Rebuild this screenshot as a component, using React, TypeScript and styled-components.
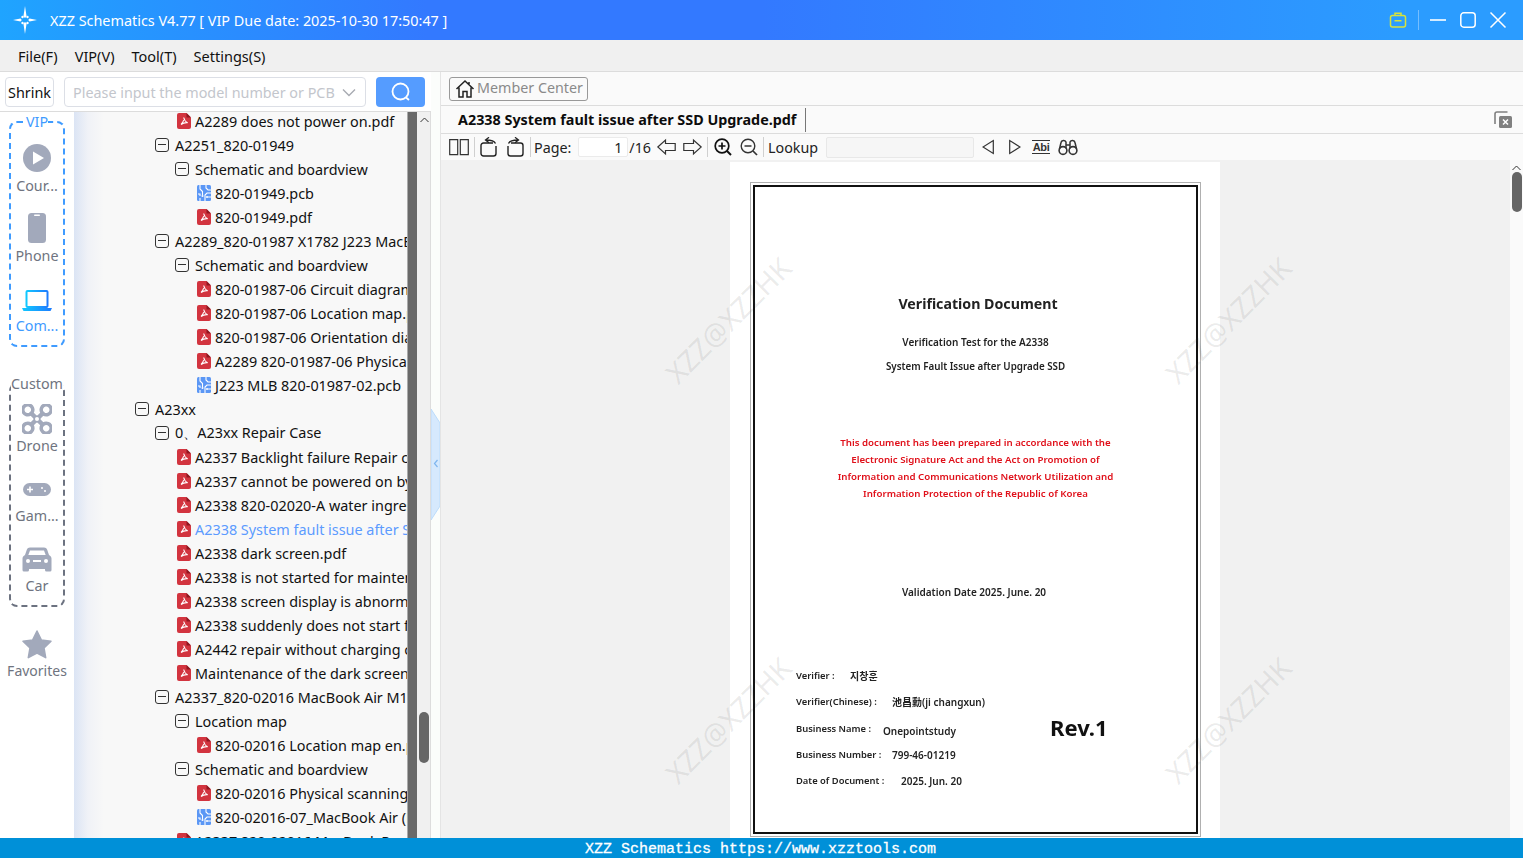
import React from "react";
import styled, { createGlobalStyle } from "styled-components";

const Global = createGlobalStyle`
  html, body { margin: 0; padding: 0; height: 100%; overflow: hidden; background: #fff; }
  #root { height: 100%; }
  * { box-sizing: border-box; }
  body { font-family: "Noto Sans", "Open Sans", sans-serif; color: #111; }
`;

const Shell = styled.div`display:flex;flex-direction:column;height:858px;width:1523px;overflow:hidden;`;
const TitleBar = styled.header`
  height:40px;flex:none;display:flex;align-items:center;color:#fff;padding-left:13px;
  background:linear-gradient(90deg,#1fa4ff 0%,#3379ff 28%,#3379ff 50%,#2b9cff 92%,#2b9cff 100%);
`;
const Logo = styled.svg`display:block;width:24px;height:28px;flex:none;`;
const Title = styled.div`margin-left:13px;font-size:14.4px;white-space:nowrap;flex:1;`;
const WinControls = styled.div`display:flex;align-items:center;padding-right:16px;`;
const WinDivider = styled.span`width:1px;height:20px;background:rgba(255,255,255,.35);margin:0 10px 0 11px;`;
const WinBtn = styled.svg`display:block;width:18px;height:18px;margin-left:${p=>p.$ml ?? 0}px;`;
const MenuBar = styled.nav`
  height:32px;flex:none;background:#f0f0f0;border-bottom:1px solid #dcdcdc;display:flex;align-items:center;padding-left:18px;gap:17px;font-size:14.5px;
`;
const Body = styled.div`flex:1;display:flex;min-height:0;`;
const LeftPane = styled.section`width:431px;flex:none;display:flex;flex-direction:column;min-height:0;`;
const SearchBar = styled.div`height:40px;flex:none;display:flex;align-items:center;padding:0 6px 0 5px;border-bottom:1px solid #dcdcdc;background:#fff;`;
const Shrink = styled.button`width:49px;height:30px;padding:1px 0 0;border:1px solid #dcdfe6;border-radius:4px;background:#fff;font:14.4px "Noto Sans",sans-serif;color:#111;`;
const SearchBox = styled.div`margin-left:10px;width:302px;height:30px;border:1px solid #dcdfe6;border-radius:4px;display:flex;align-items:center;justify-content:space-between;padding:2px 9px 0 8px;color:#c3c6cc;font-size:14.35px;white-space:nowrap;`;
const SearchBtn = styled.button`margin-left:10px;width:49px;height:30px;border:0;border-radius:4px;background:#559cff;display:flex;align-items:center;justify-content:center;padding:0;`;
const LeftBody = styled.div`flex:1;display:flex;min-height:0;`;
const Side = styled.aside`width:74px;flex:none;background:#fff;padding:3px 0 0 9px;display:flex;flex-direction:column;`;
const Group = styled.fieldset`
  width:56px;margin:0;padding:0;border:2px dashed ${p=>p.$c};border-radius:8px;height:${p=>p.$h}px;margin-top:${p=>p.$mt}px;
  display:flex;flex-direction:column;align-items:center;
`;
const Legend = styled.legend`padding:0;margin:0 auto;font-size:14.3px;line-height:14px;color:${p=>p.$c};white-space:nowrap;`;
const SideItem = styled.div`
  width:70px;height:70px;flex:none;margin:0 -9px;display:flex;flex-direction:column;align-items:center;color:${p=>p.$on?"#3f9bff":"#6f7480"};font-size:14.3px;line-height:20px;
  svg{display:block;width:30px;height:30px;margin-bottom:${p=>p.$tight?2:3}px;flex:none;}
`;
const GroupInner = styled.div`display:flex;flex-direction:column;align-items:center;padding-top:${p=>p.$pt}px;`;
const Fav = styled(SideItem)`margin:23px 0 0 -7px;font-size:14px;line-height:18px;`;
const TreeWrap = styled.div`width:333px;flex:none;overflow:hidden;background:linear-gradient(90deg,#dbe4f4 0,#f0f2f7 14px,#f8f8f8 30px);`;
const Tree = styled.div`margin-top:-3px;`;
const Row = styled.div`height:24px;display:flex;align-items:center;white-space:nowrap;padding-left:${p=>(p.$d-1)*20+61}px;font-size:14.4px;color:${p=>p.$on?"#5c9bff":"#111"};`;
const ToggleBox = styled.span`width:14px;height:14px;flex:none;border:1px solid #333;border-radius:3px;margin-right:6px;position:relative;&:after{content:"";position:absolute;left:2px;right:2px;top:5px;height:1.4px;background:#333;}`;
const FileIcon = styled.svg`width:14px;height:16px;flex:none;margin-left:2px;margin-right:4px;`;
const DarkBar = styled.div`width:10px;flex:none;background:#696969;border-left:1px solid #aaa;`;
const ScrollTrack = styled.div`width:14px;flex:none;background:#f0f0f0;border-right:1px solid #ddd;position:relative;`;
const Thumb = styled.div`position:absolute;left:${p=>p.$l}px;width:10px;top:${p=>p.$t}px;height:${p=>p.$h}px;background:#666;border-radius:5px;`;
const ChevUp = styled.svg`position:absolute;left:${p=>p.$l}px;top:${p=>p.$t}px;width:9px;height:6px;`;
const Splitter = styled.div`width:10px;flex:none;background:#fbfdfb;border-right:1px solid #e4e4e4;position:relative;`;
const Collapse = styled.svg`position:absolute;left:0;top:337px;width:9px;height:111px;`;
const RightPane = styled.main`flex:1;min-width:0;display:flex;flex-direction:column;background:#fafafa;`;
const MemberRow = styled.div`height:34px;flex:none;display:flex;align-items:center;padding:0 0 0 8px;border-bottom:1px solid #dcdcdc;`;
const MemberBtn = styled.button`width:139px;height:24px;display:flex;align-items:center;gap:2px;padding:0 0 0 5px;border:1px solid #999;border-radius:3px;background:#fafafa;color:#8a8a8a;font:14.3px "Noto Sans",sans-serif;white-space:nowrap;span{position:relative;top:-1px;}`;
const TabRow = styled.div`height:28px;flex:none;display:flex;align-items:center;padding:0 11px 0 17px;border-bottom:1px solid #dcdcdc;`;
const TabTitle = styled.div`font-size:14.35px;font-weight:700;color:#0c0c0c;white-space:nowrap;`;
const TabSep = styled.span`width:1px;height:24px;background:#777;margin-left:9px;flex:none;`;
const TabClose = styled.svg`width:18px;height:18px;margin-left:auto;`;
const ToolRow = styled.div`height:26px;flex:none;display:flex;align-items:center;padding-left:8px;font-size:14.3px;color:#222;`;
const Tool = styled.svg`display:block;flex:none;margin-left:${p=>p.$ml ?? 0}px;width:${p=>p.$w}px;height:${p=>p.$h ?? 18}px;`;
const Sep = styled.span`width:1px;height:20px;background:#d0d0d0;margin:0 ${p=>p.$r ?? 6}px 0 ${p=>p.$l ?? 6}px;flex:none;`;
const PageInput = styled.div`width:50px;height:20px;margin-left:7px;background:#fff;border:1px solid #ebebeb;border-radius:2px;text-align:right;padding-right:5px;line-height:19px;`;
const PageTotal = styled.span`margin-left:1px;`;
const LookupInput = styled.div`width:148px;height:21px;margin-left:8px;background:#f6f6f6;border:1px solid #e8e8e8;border-radius:2px;`;
const AbiIcon = styled.span`margin-left:11px;width:18px;height:14px;flex:none;font:700 11px/12px "Liberation Sans",sans-serif;letter-spacing:-.3px;text-align:center;color:#333;border-bottom:1.5px solid #333;border-top:1px solid #333;`;
const Viewer = styled.div`flex:1;min-height:0;display:flex;justify-content:center;background:#f1f1f1;overflow:hidden;position:relative;padding-right:13px;padding-top:2px;`;
const VScroll = styled.div`position:absolute;right:0;top:0;bottom:0;width:13px;background:#fafafa;`;
const Mark = styled.div`position:absolute;left:${p=>p.$x}px;top:${p=>p.$y}px;transform:translate(-50%,-50%) rotate(-45deg);font-size:28.5px;color:rgba(60,60,60,.1);white-space:nowrap;pointer-events:none;`;
const PageSheet = styled.div`width:490px;height:700px;flex:none;background:#fff;padding:20px 19px 0 20px;margin-left:-1px;`;
const Outer = styled.div`width:451px;height:655px;border:1px solid #b0b0b0;padding:2px;`;
const Inner = styled.div`height:100%;border:2px solid #111;font-family:"Noto Sans","Noto Sans CJK KR",sans-serif;font-weight:600;color:#222;filter:blur(.25px);display:flex;flex-direction:column;align-items:center;`;
const DocTitle = styled.div`font-size:14.2px;font-weight:700;line-height:20px;margin-top:107px;margin-left:5px;`;
const DocSub = styled.div`font-size:${p=>p.$fs ?? 10}px;line-height:14px;margin-top:${p=>p.$mt}px;margin-left:${p=>p.$ml ?? 0}px;white-space:nowrap;`;
const DocRed = styled.div`font-size:9.7px;line-height:17px;color:#e0101a;margin-top:60px;margin-left:0;text-align:center;white-space:nowrap;`;
const Sign = styled.div`align-self:stretch;display:flex;margin-top:70px;`;
const SignList = styled.div`margin-left:41px;`;
const SignRow = styled.div`font-size:9.4px;line-height:14px;height:26.3px;white-space:nowrap;display:flex;`;
const SignKey = styled.span`width:${p=>p.$w}px;flex:none;`;
const SignVal = styled.span`font-size:10px;position:relative;top:${p=>p.$dy ?? 0}px;`;
const Rev = styled.div`font-size:22px;font-weight:700;color:#111;margin:44px 0 0 65px;line-height:28px;`;
const Status = styled.footer`height:20px;flex:none;background:#0090d8;color:#fff;text-align:center;font:15px/20px "Liberation Mono",monospace;-webkit-text-stroke:.3px #fff;white-space:pre;padding:2px 2px 0 0;`;

const Pdf = () => (
  <FileIcon viewBox="0 0 14 16">
    <path d="M2 0h7.500L14 4.500V14a2 2 0 0 1-2 2H2a2 2 0 0 1-2-2V2a2 2 0 0 1 2-2z" fill="#d2343f"/>
    <path d="M9.500 0L14 4.500H9.500z" fill="#8f1720"/>
    <path d="M6.700 4.500c.5 2.300 1.700 4.300 4 5.200-2.200-.2-4.700.3-6.700 1.800M6.700 7.200c-.5 1.500-1.300 3-2.700 4.300" fill="none" stroke="#fff" strokeWidth="1.100"/>
  </FileIcon>
);
const Pcb = () => (
  <FileIcon viewBox="0 0 14 16">
    <rect width="14" height="16" rx="1.500" fill="#5b97f5"/>
    <path d="M3 0v4l2.500 2.500V10M3 16v-3M9 0v3l2 2h3M8 16v-6l2-2h4M10.500 12H14M1 9h2v2" fill="none" stroke="#fff" strokeWidth="1.100"/>
    <circle cx="5.500" cy="11" r="1" fill="#fff"/><circle cx="10" cy="12" r="1" fill="#fff"/>
  </FileIcon>
);

type R = [number, "box"|"pdf"|"pcb", string, boolean?];
const rows: R[] = [
  [3,"pdf","A2289 does not power on.pdf"],
  [2,"box","A2251_820-01949"],
  [3,"box","Schematic and boardview"],
  [4,"pcb","820-01949.pcb"],
  [4,"pdf","820-01949.pdf"],
  [2,"box","A2289_820-01987 X1782 J223 MacBook Pro"],
  [3,"box","Schematic and boardview"],
  [4,"pdf","820-01987-06 Circuit diagram.pdf"],
  [4,"pdf","820-01987-06 Location map.pdf"],
  [4,"pdf","820-01987-06 Orientation diagram.pdf"],
  [4,"pdf","A2289 820-01987-06 Physical scanning.pdf"],
  [4,"pcb","J223 MLB 820-01987-02.pcb"],
  [1,"box","A23xx"],
  [2,"box","0、A23xx Repair Case"],
  [3,"pdf","A2337 Backlight failure Repair case.pdf"],
  [3,"pdf","A2337 cannot be powered on by repair.pdf"],
  [3,"pdf","A2338 820-02020-A water ingress repair.pdf"],
  [3,"pdf","A2338 System fault issue after SSD Upgrade.pdf",true],
  [3,"pdf","A2338 dark screen.pdf"],
  [3,"pdf","A2338 is not started for maintenance.pdf"],
  [3,"pdf","A2338 screen display is abnormal.pdf"],
  [3,"pdf","A2338 suddenly does not start fault.pdf"],
  [3,"pdf","A2442 repair without charging case.pdf"],
  [3,"pdf","Maintenance of the dark screen.pdf"],
  [2,"box","A2337_820-02016 MacBook Air M1"],
  [3,"box","Location map"],
  [4,"pdf","820-02016 Location map en.pdf"],
  [3,"box","Schematic and boardview"],
  [4,"pdf","820-02016 Physical scanning.pdf"],
  [4,"pcb","820-02016-07_MacBook Air (M1).pcb"],
  [3,"pdf","A2337 820-02016 MacBook Repair.pdf"],
];

const G = "#a2a9bb";

export default function App() {
  return (
    <Shell>
      <Global/>
      <TitleBar>
        <Logo viewBox="0 0 24 28">
          <path d="M12 0l1.600 10.500-1.600 1.500-1.600-1.500zM12 28l-1.600-10.500 1.600-1.500 1.600 1.500zM0 14l7.500-1.500 1.300 1.500-1.300 1.500zM24 14l-7.500 1.500-1.300-1.500 1.300-1.500z" fill="#fff"/>
          <circle cx="9.500" cy="11" r="1.200" fill="#fff"/><circle cx="14.500" cy="11" r="1.200" fill="#fff"/><circle cx="9.500" cy="17" r="1.200" fill="#fff"/><circle cx="14.500" cy="17" r="1.200" fill="#fff"/>
        </Logo>
        <Title>XZZ Schematics V4.77 [ VIP Due date: 2025-10-30 17:50:47 ]</Title>
        <WinControls>
          <WinBtn viewBox="0 0 18 18"><rect x="1.500" y="4.500" width="15" height="11.500" rx="2" fill="none" stroke="#d7e23c" strokeWidth="1.500"/><path d="M6 4.500V2.300h6v2.200M5.500 9.800h7" fill="none" stroke="#d7e23c" strokeWidth="1.500"/></WinBtn>
          <WinDivider/>
          <WinBtn viewBox="0 0 18 18"><path d="M1 9h16" stroke="#fff" strokeWidth="1.600"/></WinBtn>
          <WinBtn $ml={12} viewBox="0 0 18 18"><rect x="1.800" y="1.800" width="14.400" height="14.400" rx="3" fill="none" stroke="#fff" strokeWidth="1.500"/></WinBtn>
          <WinBtn $ml={12} viewBox="0 0 18 18"><path d="M1.500 1.500l15 15M16.500 1.500l-15 15" stroke="#fff" strokeWidth="1.500"/></WinBtn>
        </WinControls>
      </TitleBar>
      <MenuBar><span>File(F)</span><span>VIP(V)</span><span>Tool(T)</span><span>Settings(S)</span></MenuBar>
      <Body>
        <LeftPane>
          <SearchBar>
            <Shrink>Shrink</Shrink>
            <SearchBox>
              <span>Please input the model number or PCB</span>
              <svg width="14" height="9" viewBox="0 0 14 9"><path d="M1 1.500l6 6 6-6" fill="none" stroke="#a8abb2" strokeWidth="1.400"/></svg>
            </SearchBox>
            <SearchBtn aria-label="search">
              <svg width="20" height="20" viewBox="0 0 20 20"><circle cx="9.500" cy="9.500" r="8" fill="none" stroke="#fff" strokeWidth="1.800"/><path d="M15 15.500l3 2.500" stroke="#fff" strokeWidth="1.800"/></svg>
            </SearchBtn>
          </SearchBar>
          <LeftBody>
            <Side>
              <Group $c="#3f9bff" $h={232} $mt={0}>
                <Legend $c="#3f9bff">VIP</Legend>
                <GroupInner $pt={14}>
                  <SideItem>
                    <svg viewBox="0 0 30 30"><circle cx="15" cy="15" r="14" fill={G}/><path d="M11 8.500l11 6.500-11 6.500z" fill="#fff"/></svg>
                    <span>Cour...</span>
                  </SideItem>
                  <SideItem>
                    <svg viewBox="0 0 30 30"><rect x="6" y="0" width="18" height="30" rx="3.500" fill={G}/><rect x="12" y="1.500" width="6" height="1.500" rx=".7" fill="#fff"/></svg>
                    <span>Phone</span>
                  </SideItem>
                  <SideItem $on>
                    <svg viewBox="0 0 30 30"><defs><linearGradient id="lp" x1="0" x2="1"><stop offset="0" stopColor="#11c8ff"/><stop offset="1" stopColor="#1d7cff"/></linearGradient></defs><rect x="4.500" y="8" width="21" height="16" rx="1" fill="none" stroke="url(#lp)" strokeWidth="2"/><path d="M0 25h30l-1.500 3h-27z" fill="url(#lp)"/></svg>
                    <span>Com...</span>
                  </SideItem>
                </GroupInner>
              </Group>
              <Group $c="#6c7280" $h={230} $mt={30}>
                <Legend $c="#6f7480">Custom</Legend>
                <GroupInner $pt={13}>
                  <SideItem $tight>
                    <svg viewBox="0 0 30 30"><g fill="none" stroke={G}><path d="M10 8.500A5 5 0 1 0 8.500 10M20 8.500A5 5 0 1 1 21.500 10M10 21.500A5 5 0 1 1 8.500 20M20 21.500A5 5 0 1 0 21.500 20" strokeWidth="3.500"/><path d="M8 8l14 14M22 8L8 22" strokeWidth="4.500"/></g><circle cx="15" cy="15" r="3.400" fill={G}/><circle cx="15" cy="15" r="2" fill="#fff"/></svg>
                    <span>Drone</span>
                  </SideItem>
                  <SideItem $tight>
                    <svg viewBox="0 0 30 30"><rect x="1" y="9" width="28" height="13" rx="6.500" fill={G}/><path d="M8 12.500v6M5 15.500h6" stroke="#fff" strokeWidth="1.600"/><circle cx="20" cy="14" r="1" fill="#fff"/><circle cx="23" cy="17" r="1" fill="#fff"/></svg>
                    <span>Gam...</span>
                  </SideItem>
                  <SideItem $tight>
                    <svg viewBox="0 0 30 30"><path d="M8 3.500h14c1.500 0 2.600.8 3.200 2.300L27 11c1.500.8 2.500 2 2.500 3.500V26a1.500 1.500 0 0 1-1.500 1.500h-3.500A1.500 1.500 0 0 1 23 26v-1H7v1a1.500 1.500 0 0 1-1.500 1.500H2A1.500 1.500 0 0 1 .5 26V14.500C.5 13 1.500 11.800 3 11l1.800-5.200C5.400 4.300 6.500 3.500 8 3.500z" fill={G}/><path d="M8 6.500h14l1.700 4.500H6.300z" fill="#fff"/><circle cx="6" cy="17" r="2" fill="#fff"/><circle cx="24" cy="17" r="2" fill="#fff"/><rect x="11" y="16" width="8" height="2" fill="#fff"/></svg>
                    <span>Car</span>
                  </SideItem>
                </GroupInner>
              </Group>
              <Fav $tight>
                <svg viewBox="0 0 30 30"><path d="M15 1l4.300 8.900 9.700 1.300-7 6.800 1.700 9.700L15 23.100l-8.700 4.600L8 18l-7-6.800 9.700-1.300z" fill={G} stroke={G} strokeLinejoin="round" strokeWidth="1.500"/></svg>
                <span>Favorites</span>
              </Fav>
            </Side>
            <TreeWrap>
              <Tree>
                {rows.map(([d,k,t,on],i)=>(
                  <Row key={i} $d={d} $on={on}>
                    {k==="box"?<ToggleBox/>:k==="pdf"?<Pdf/>:<Pcb/>}
                    <span>{t}</span>
                  </Row>
                ))}
              </Tree>
            </TreeWrap>
            <DarkBar/>
            <ScrollTrack>
              <ChevUp $l={3} $t={5} viewBox="0 0 9 6"><path d="M.5 5L4.500 1l4 4" fill="none" stroke="#333"/></ChevUp>
              <Thumb $l={2} $t={600} $h={51}/>
            </ScrollTrack>
          </LeftBody>
        </LeftPane>
        <Splitter>
          <Collapse viewBox="0 0 9 111">
            <path d="M0 0l9 14v83L0 111z" fill="#d6e9fd" stroke="#bcdcfb"/>
            <path d="M6.500 51l-3 3.500 3 3.500" fill="none" stroke="#7fb6ef" strokeWidth="1.200"/>
          </Collapse>
        </Splitter>
        <RightPane>
          <MemberRow>
            <MemberBtn>
              <svg width="20" height="20" viewBox="0 0 20 20"><path d="M1.500 10L10 2l8.500 8M4 8.500V18h4v-5.500h4V18h4V8.500M14 3v3" fill="none" stroke="#222" strokeWidth="1.500"/></svg>
              <span>Member Center</span>
            </MemberBtn>
          </MemberRow>
          <TabRow>
            <TabTitle>A2338 System fault issue after SSD Upgrade.pdf</TabTitle>
            <TabSep/>
            <TabClose viewBox="0 0 18 18"><path d="M13.500 1H3a2 2 0 0 0-2 2v10" fill="none" stroke="#808080" strokeWidth="1.600"/><rect x="5" y="5" width="13" height="12" rx="1.500" fill="#808080"/><path d="M9 8.500l5 5M14 8.500l-5 5" stroke="#fff" strokeWidth="1.500"/></TabClose>
          </TabRow>
          <ToolRow>
            <Tool $w={20} viewBox="0 0 20 18"><path d="M.7 1.700h8v15h-8zM11.300 1.700h8v15h-8z" fill="none" stroke="#333" strokeWidth="1.200"/></Tool>
            <Sep $l={5} $r={5}/>
            <Tool $w={18} $h={20} viewBox="0 0 18 20"><path d="M13 6H3.500A2.500 2.500 0 0 0 1 8.500v8A2.500 2.500 0 0 0 3.500 19h10a2.500 2.500 0 0 0 2.500-2.500V9" fill="none" stroke="#222" strokeWidth="1.400"/><path d="M15.500 6.500C14.500 4 11.500 3 6 3M9 .3L5.500 3 9 5.700" fill="none" stroke="#222" strokeWidth="1.300"/></Tool>
            <Tool $ml={8} $w={18} $h={20} viewBox="0 0 18 20"><path d="M5 6h9.500A2.500 2.500 0 0 1 17 8.500v8a2.500 2.500 0 0 1-2.500 2.500h-10A2.500 2.500 0 0 1 2 16.500V9" fill="none" stroke="#222" strokeWidth="1.400"/><path d="M2.500 6.500C3.500 4 6.500 3 12 3M9 .3L12.500 3 9 5.700" fill="none" stroke="#222" strokeWidth="1.300"/></Tool>
            <Sep $l={6} $r={3}/>
            <span>Page:</span>
            <PageInput>1</PageInput>
            <PageTotal>/16</PageTotal>
            <Tool $ml={6} $w={19} viewBox="0 0 19 18"><path d="M.8 9L8.500 2v3.500h9.700v7H8.500V16z" fill="none" stroke="#333" strokeWidth="1.200"/></Tool>
            <Tool $ml={7} $w={19} viewBox="0 0 19 18"><path d="M18.200 9L10.500 2v3.500H.8v7h9.700V16z" fill="none" stroke="#333" strokeWidth="1.200"/></Tool>
            <Sep $l={5} $r={6}/>
            <Tool $w={18} viewBox="0 0 18 18"><circle cx="8" cy="8" r="6.800" fill="none" stroke="#111" strokeWidth="1.700"/><path d="M13 13l4 4" stroke="#111" strokeWidth="2"/><path d="M4.500 8h7M8 4.500v7" stroke="#111" strokeWidth="1.700"/></Tool>
            <Tool $ml={8} $w={18} viewBox="0 0 18 18"><circle cx="8" cy="8" r="6.800" fill="none" stroke="#333" strokeWidth="1.400"/><path d="M13 13l4 4" stroke="#333" strokeWidth="1.700"/><path d="M4.500 8h7" stroke="#333" strokeWidth="1.500"/></Tool>
            <Sep $l={5} $r={4}/>
            <span>Lookup</span>
            <LookupInput/>
            <Tool $ml={8} $w={12} viewBox="0 0 12 18"><path d="M11.300 2.500v13L1 9z" fill="none" stroke="#333" strokeWidth="1.200"/></Tool>
            <Tool $ml={15} $w={12} viewBox="0 0 12 18"><path d="M.7 2.500v13L11 9z" fill="none" stroke="#333" strokeWidth="1.200"/></Tool>
            <AbiIcon>Abi</AbiIcon>
            <Tool $ml={8} $w={20} viewBox="0 0 20 18"><path d="M1.500 11L3 4.500C3.500 2 7 2 8 4v6.500M18.500 11L17 4.500C16.500 2 13 2 12 4v6.500M8 7h4" fill="none" stroke="#333" strokeWidth="1.500"/><circle cx="5" cy="12.500" r="3.900" fill="none" stroke="#333" strokeWidth="1.600"/><circle cx="15" cy="12.500" r="3.900" fill="none" stroke="#333" strokeWidth="1.600"/></Tool>
          </ToolRow>
          <Viewer>
            <PageSheet>
              <Outer>
                <Inner>
                  <DocTitle>Verification Document</DocTitle>
                  <DocSub $mt={21}>Verification Test for the A2338</DocSub>
                  <DocSub $mt={11} $fs={9.8}>System Fault Issue after Upgrade SSD</DocSub>
                  <DocRed>
                    This document has been prepared in accordance with the<br/>
                    Electronic Signature Act and the Act on Promotion of<br/>
                    Information and Communications Network Utilization and<br/>
                    Information Protection of the Republic of Korea
                  </DocRed>
                  <DocSub $mt={83} $ml={-3}>Validation Date 2025. June. 20</DocSub>
                  <Sign>
                    <SignList>
                      <SignRow><SignKey $w={54}>Verifier :</SignKey><SignVal>지창훈</SignVal></SignRow>
                      <SignRow><SignKey $w={96}>Verifier(Chinese) :</SignKey><SignVal>池昌勳(ji changxun)</SignVal></SignRow>
                      <SignRow><SignKey $w={87}>Business Name :</SignKey><SignVal $dy={2}>Onepointstudy</SignVal></SignRow>
                      <SignRow><SignKey $w={96}>Business Number :</SignKey><SignVal>799-46-01219</SignVal></SignRow>
                      <SignRow><SignKey $w={105}>Date of Document :</SignKey><SignVal>2025. Jun. 20</SignVal></SignRow>
                    </SignList>
                    <Rev>Rev.1</Rev>
                  </Sign>
                </Inner>
              </Outer>
            </PageSheet>
            <Mark $x={287} $y={160}>XZZ@XZZHK</Mark>
            <Mark $x={787} $y={160}>XZZ@XZZHK</Mark>
            <Mark $x={287} $y={560}>XZZ@XZZHK</Mark>
            <Mark $x={787} $y={560}>XZZ@XZZHK</Mark>
            <VScroll>
              <ChevUp $l={2} $t={5} viewBox="0 0 9 6"><path d="M.5 5L4.500 1l4 4" fill="none" stroke="#333"/></ChevUp>
              <Thumb $l={2} $t={12} $h={40}/>
            </VScroll>
          </Viewer>
        </RightPane>
      </Body>
      <Status>XZZ Schematics https://www.xzztools.com</Status>
    </Shell>
  );
}
